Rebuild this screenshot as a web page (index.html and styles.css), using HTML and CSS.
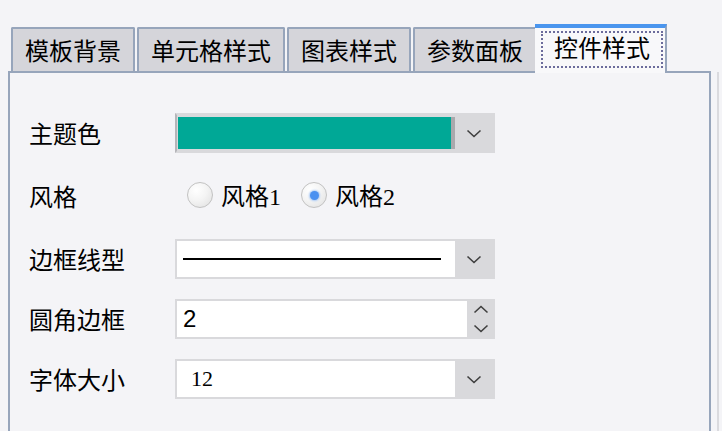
FILE: index.html
```html
<!DOCTYPE html>
<html lang="zh-CN">
<head>
<meta charset="utf-8">
<title>控件样式</title>
<link rel="stylesheet" href="styles.css">
</head>
<body>
<div class="window">
  <div class="pane">
    <div class="tabs">
      <div class="tab">模板背景</div>
      <div class="tab">单元格样式</div>
      <div class="tab">图表样式</div>
      <div class="tab">参数面板</div>
      <div class="tab active"><span class="focus">控件样式</span></div>
    </div>
    <div class="panel">
      <div class="form">
        <div class="label">主题色</div>
        <div class="combo color-combo">
          <div class="swatch"></div>
          <div class="combo-btn"><svg width="16" height="9" viewBox="0 0 16 9"><path d="M1.5 1.5 L8 7.5 L14.5 1.5" fill="none" stroke="#3f3f3f" stroke-width="1.6"/></svg></div>
        </div>

        <div class="label">风格</div>
        <div class="radios">
          <span class="radio"></span><span class="radio-label">风格<span class="num">1</span></span>
          <span class="radio checked"></span><span class="radio-label">风格<span class="num">2</span></span>
        </div>

        <div class="label">边框线型</div>
        <div class="combo">
          <div class="field line-field"><span class="line"></span></div>
          <div class="combo-btn"><svg width="16" height="9" viewBox="0 0 16 9"><path d="M1.5 1.5 L8 7.5 L14.5 1.5" fill="none" stroke="#3f3f3f" stroke-width="1.6"/></svg></div>
        </div>

        <div class="label">圆角边框</div>
        <div class="combo">
          <div class="field spin-field">2</div>
          <div class="spin-btn">
            <svg width="16" height="9" viewBox="0 0 16 9"><path d="M1.5 7.5 L8 1.5 L14.5 7.5" fill="none" stroke="#3f3f3f" stroke-width="1.6"/></svg>
            <svg width="16" height="9" viewBox="0 0 16 9"><path d="M1.5 1.5 L8 7.5 L14.5 1.5" fill="none" stroke="#3f3f3f" stroke-width="1.6"/></svg>
          </div>
        </div>

        <div class="label">字体大小</div>
        <div class="combo">
          <div class="field size-field">12</div>
          <div class="combo-btn"><svg width="16" height="9" viewBox="0 0 16 9"><path d="M1.5 1.5 L8 7.5 L14.5 1.5" fill="none" stroke="#3f3f3f" stroke-width="1.6"/></svg></div>
        </div>
      </div>
    </div>
  </div>
  <div class="edge"></div>
</div>
</body>
</html>
```
FILE: styles.css
```css
html, body {
  margin: 0;
  padding: 0;
  background: #f4f4f7;
  overflow: hidden;
}
body {
  width: 722px;
  height: 431px;
  font-family: "Noto Sans CJK SC", "Noto Sans", sans-serif;
  color: #000;
}
.window {
  display: flex;
  align-items: flex-start;
}
.pane {
  width: 703px;
  margin-left: 8px;
  margin-top: 24px;
  display: flex;
  flex-direction: column;
}
.edge {
  width: 2px;
  height: 359px;
  margin-left: 6px;
  margin-top: 72px;
  background: #dadade;
}
.tabs {
  display: flex;
  align-items: flex-start;
  gap: 2px;
  padding-left: 3px;
  height: 49px;
  margin-bottom: -2px;
}
.tab {
  box-sizing: border-box;
  height: 44px;
  margin-top: 3px;
  padding: 0 12px;
  background: #d5d5da;
  border: 2px solid #97a5bb;
  border-bottom: none;
  border-radius: 2px 2px 0 0;
  font-size: 24px;
  line-height: 1;
  display: flex;
  align-items: center;
  white-space: nowrap;
}
.tab.active {
  position: relative;
  z-index: 1;
  height: 49px;
  margin-top: 0;
  margin-left: -4px;
  padding: 3px 2px 5px 6px;
  background: #f8f8fa;
  border: none;
  border-top: 4px solid #4a95ee;
  border-right: 2px solid #97a5bb;
  border-radius: 0;
  align-items: stretch;
}
.focus {
  box-sizing: border-box;
  display: flex;
  align-items: flex-start;
  padding: 2px 11px 0 11px;
  border: 2px dotted #6c6c9c;
  line-height: 1;
}
.panel {
  box-sizing: border-box;
  height: 360px;
  border: 2px solid #97a5bb;
  border-bottom: none;
  padding: 40px 0 0 19px;
}
.form {
  display: grid;
  grid-template-columns: 146px 320px;
  grid-template-rows: 40px 46px 40px 40px 40px;
  row-gap: 20px;
}
.label {
  font-size: 24px;
  line-height: 1;
  align-self: center;
  white-space: nowrap;
}
.combo {
  box-sizing: border-box;
  height: 40px;
  display: flex;
  border: 2px solid #d9d9dc;
  background: #fff;
}
.color-combo {
  background: #d9d9dc;
  padding: 2px 0 2px 1px;
  border-left-color: #b5b5b9;
}
.swatch {
  flex: 1;
  background: #00a896;
  border-right: 4px solid #a9a9ad;
}
.combo-btn {
  width: 38px;
  background: #d9d9dc;
  display: flex;
  align-items: center;
  justify-content: center;
}
.color-combo .combo-btn {
  margin: -2px 0;
}
.field {
  flex: 1;
  display: flex;
  align-items: center;
}
.line-field {
  padding-left: 6px;
}
.line {
  width: 258px;
  height: 2px;
  background: #000;
}
.spin-field {
  padding-left: 6px;
  font-family: "Liberation Sans", Arial, sans-serif;
  font-size: 24px;
}
.size-field {
  padding-left: 14px;
  font-family: "Liberation Serif", "Times New Roman", serif;
  font-size: 22px;
}
.spin-btn {
  width: 26px;
  background: #d9d9dc;
  display: flex;
  flex-direction: column;
  align-items: center;
  justify-content: center;
  gap: 10px;
  padding-left: 2px;
  box-sizing: border-box;
}
.radios {
  display: flex;
  align-items: center;
}
.radio {
  box-sizing: border-box;
  width: 26px;
  height: 26px;
  border-radius: 50%;
  border: 1px solid #c2c2c2;
  background: radial-gradient(circle at 35% 30%, #ffffff 0%, #f4f4f4 45%, #dedede 100%);
  margin-left: 12px;
  display: flex;
  align-items: center;
  justify-content: center;
  margin-top: -2px;
}
.radio + .radio-label + .radio {
  margin-left: 20px;
}
.radio.checked::after {
  content: "";
  width: 9px;
  height: 9px;
  border-radius: 50%;
  background: #4a90f0;
  box-shadow: 0 0 2px 1px #a9c8f4;
}
.radio-label {
  margin-left: 8px;
  font-size: 24px;
  line-height: 1;
  white-space: nowrap;
}
.num {
  font-family: "Liberation Serif", "Times New Roman", serif;
  font-size: 24px;
}
```
